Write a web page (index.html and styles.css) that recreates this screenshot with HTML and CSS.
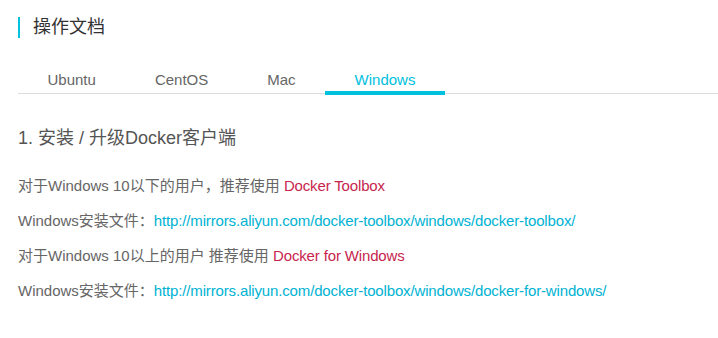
FILE: index.html
```html
<!DOCTYPE html>
<html lang="zh-CN">
<head>
    <meta charset="UTF-8">
    <title>操作文档</title>
    <link rel="stylesheet" href="styles.css">
</head>
<body>
    <div class="page">
        <h2 class="page-title">操作文档</h2>

        <ul class="tabs">
            <li class="tab">Ubuntu</li>
            <li class="tab">CentOS</li>
            <li class="tab">Mac</li>
            <li class="tab active">Windows</li>
        </ul>

        <div class="tab-content">
            <h3 class="step">1. 安装 / 升级Docker客户端</h3>
            <p>对于Windows 10以下的用户，推荐使用 <span class="mark">Docker Toolbox</span></p>
            <p>Windows安装文件：<a href="#">http://mirrors.aliyun.com/docker-toolbox/windows/docker-toolbox/</a></p>
            <p>对于Windows 10以上的用户 推荐使用 <span class="mark">Docker for Windows</span></p>
            <p>Windows安装文件：<a href="#">http://mirrors.aliyun.com/docker-toolbox/windows/docker-for-windows/</a></p>
        </div>
    </div>
</body>
</html>
```

FILE: styles.css
```css
body {
    margin: 0;
    background: #fff;
    font-family: "Liberation Sans", Arial, "Noto Sans CJK SC", sans-serif;
    color: #666;
}

.page {
    padding: 17px 0 0 18px;
}

.page-title {
    margin: 0;
    padding-left: 13px;
    border-left: 2px solid #00c1de;
    font-size: 18px;
    font-weight: normal;
    line-height: 21px;
    color: #333;
}

.tabs {
    display: flex;
    margin: 32px 0 0;
    padding: 0;
    list-style: none;
    border-bottom: 1px solid #ddd;
}

.tab {
    position: relative;
    padding: 0 29.5px 3px;
    font-size: 15px;
    line-height: 20px;
    color: #666;
    cursor: pointer;
}

.tab.active {
    color: #00c1de;
}

.tab.active::after {
    content: "";
    position: absolute;
    left: 0;
    right: 0;
    bottom: -2px;
    height: 4px;
    background: #00c1de;
}

.tab-content {
    padding-top: 32px;
}

.step {
    margin: 0 0 18px;
    font-size: 18px;
    font-weight: normal;
    line-height: 24px;
    color: #555;
}

.tab-content p {
    margin: 0;
    font-size: 15px;
    line-height: 35px;
}

.mark {
    color: #c7254e;
    letter-spacing: -0.15px;
}

.tab-content a {
    color: #00b3d3;
    text-decoration: none;
    letter-spacing: -0.15px;
}
```
